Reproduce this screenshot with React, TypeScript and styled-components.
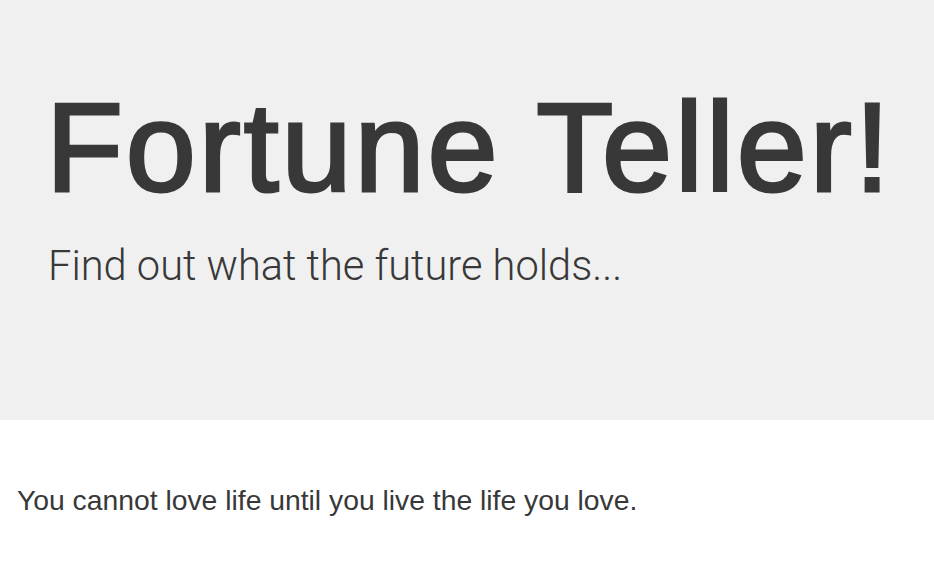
import React from 'react';
import styled, { createGlobalStyle } from 'styled-components';

const GlobalStyle = createGlobalStyle`
    html,
    body {
        margin: 0;
        padding: 0;
        background: #ffffff;
    }
    body {
        font-family: 'Liberation Sans', Arial, Helvetica, sans-serif;
        color: #383838;
    }
`;

const Jumbotron = styled.header`
    background: #f0f0f0;
    padding: 79px 46px 0;
    height: 420px;
    box-sizing: border-box;
`;

const Title = styled.h1`
    margin: 0 0 18px;
    font-size: 126px;
    line-height: 1.1;
    font-weight: 400;
    letter-spacing: 2.9px;
    -webkit-text-stroke: 3px #383838;
    white-space: nowrap;
`;

const Lead = styled.p`
    margin: 0;
    padding-left: 2px;
    font-family: Roboto, 'Liberation Sans', sans-serif;
    font-size: 41.6px;
    line-height: 60px;
    font-weight: 300;
    white-space: nowrap;
`;

const Content = styled.main`
    padding: 60px 17px 0;
`;

const Fortune = styled.p`
    margin: 0;
    font-size: 28.3px;
    line-height: 40px;
`;

function App() {
    return (
        <>
            <GlobalStyle />
            <Jumbotron>
                <Title>Fortune Teller!</Title>
                <Lead>Find out what the future holds...</Lead>
            </Jumbotron>
            <Content>
                <Fortune>You cannot love life until you live the life you love.</Fortune>
            </Content>
        </>
    );
}

export default App;
